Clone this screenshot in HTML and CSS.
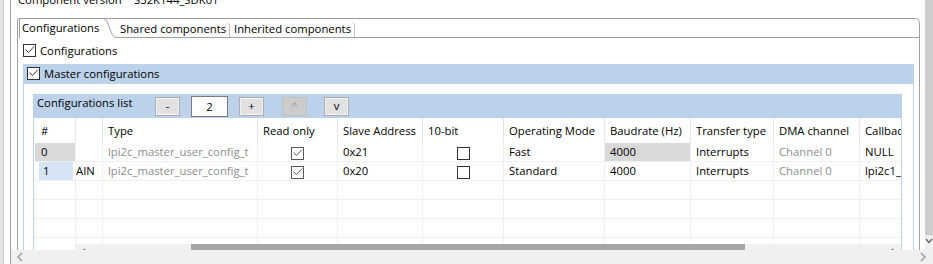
FILE: index.html
```html
<!DOCTYPE html>
<html>
<head>
<meta charset="utf-8">
<link rel="stylesheet" href="styles.css">
</head>
<body>
<div class="page">
  <div class="edge-a"></div>
  <div class="edge-b"></div>
  <div class="scroller">
    <div class="viewport">
      <div class="content">
        <div class="topline"><div class="tl"><span class="lbl">Component version</span><span class="val">S32K144_SDK01</span></div></div>
        <div class="folder">
          <div class="tabs">
            <div class="tab sel">Configurations</div>
            <svg class="curve" width="12" height="19" viewBox="0 0 12 19"><path d="M0 0 C5 0 6 18.5 12 18.5" fill="none" stroke="#a0a0a0" stroke-width="1"/></svg>
            <div class="tab t2"><span class="tab-in">Shared components</span></div>
            <div class="tab t3"><span class="tab-in">Inherited components</span></div>
            <div class="tabfill"></div>
          </div>
          <div class="panel">
            <div class="chk-row">
              <svg class="cb" width="13" height="13" viewBox="0 0 13 13"><rect x="0.5" y="0.5" width="12" height="12" fill="#fff" stroke="#333"/><path d="M2.5 5.5 L5.5 8.5 L11 2.5" fill="none" stroke="#333"/></svg>
              <span class="chk-text">Configurations</span>
            </div>
            <div class="group">
              <div class="ghead">
                <svg class="cb" width="13" height="13" viewBox="0 0 13 13"><rect x="0.5" y="0.5" width="12" height="12" fill="#fff" stroke="#333"/><path d="M2.5 5.5 L5.5 8.5 L11 2.5" fill="none" stroke="#333"/></svg>
                <span class="chk-text">Master configurations</span>
              </div>
              <div class="gbody">
                <div class="sub">
                  <div class="shead">
                    <span class="stitle">Configurations list</span>
                    <span class="btn b-minus">-</span>
                    <span class="num">2</span>
                    <span class="btn b-plus">+</span>
                    <span class="btn b-up dis">^</span>
                    <span class="btn b-down">v</span>
                  </div>
                  <div class="twrap">
                    <div class="grid">
                      <div class="hc">#</div><div class="hc"></div><div class="hc">Type</div><div class="hc">Read only</div><div class="hc">Slave Address</div><div class="hc">10-bit</div><div class="hc">Operating Mode</div><div class="hc">Baudrate (Hz)</div><div class="hc">Transfer type</div><div class="hc">DMA channel</div><div class="hc">Callback</div>

                      <div class="c"><span class="idx idx0">0</span></div><div class="c"></div><div class="c gray">lpi2c_master_user_config_t</div><div class="c ctr"><svg class="cb" width="13" height="13" viewBox="0 0 13 13"><rect x="0.5" y="0.5" width="12" height="12" fill="#fff" stroke="#5a5a5a"/><path d="M2.5 5.5 L5.5 8.5 L11 2.5" fill="none" stroke="#5a5a5a"/></svg></div><div class="c">0x21</div><div class="c ctr"><svg class="cb" width="13" height="13" viewBox="0 0 13 13"><rect x="0.5" y="0.5" width="12" height="12" fill="#fff" stroke="#333"/></svg></div><div class="c">Fast</div><div class="c"><span class="sel-cell">4000</span></div><div class="c">Interrupts</div><div class="c gray">Channel 0</div><div class="c">NULL</div>

                      <div class="c"><span class="idx idx1">1</span></div><div class="c nopad">AIN</div><div class="c gray">lpi2c_master_user_config_t</div><div class="c ctr"><svg class="cb" width="13" height="13" viewBox="0 0 13 13"><rect x="0.5" y="0.5" width="12" height="12" fill="#fff" stroke="#5a5a5a"/><path d="M2.5 5.5 L5.5 8.5 L11 2.5" fill="none" stroke="#5a5a5a"/></svg></div><div class="c">0x20</div><div class="c ctr"><svg class="cb" width="13" height="13" viewBox="0 0 13 13"><rect x="0.5" y="0.5" width="12" height="12" fill="#fff" stroke="#333"/></svg></div><div class="c">Standard</div><div class="c">4000</div><div class="c">Interrupts</div><div class="c gray">Channel 0</div><div class="c">lpi2c1_MasterCallback0</div>

                      <div class="c"></div><div class="c"></div><div class="c"></div><div class="c"></div><div class="c"></div><div class="c"></div><div class="c"></div><div class="c"></div><div class="c"></div><div class="c"></div><div class="c"></div>
                      <div class="c"></div><div class="c"></div><div class="c"></div><div class="c"></div><div class="c"></div><div class="c"></div><div class="c"></div><div class="c"></div><div class="c"></div><div class="c"></div><div class="c"></div>
                      <div class="c"></div><div class="c"></div><div class="c"></div><div class="c"></div><div class="c"></div><div class="c"></div><div class="c"></div><div class="c"></div><div class="c"></div><div class="c"></div><div class="c"></div>
                      <div class="c p"></div><div class="c p"></div><div class="c p"></div><div class="c p"></div><div class="c p"></div><div class="c p"></div><div class="c p"></div><div class="c p"></div><div class="c p"></div><div class="c p"></div><div class="c p"></div>
                    </div>
                    <div class="tscroll">
                      <div class="ts-blank"></div>
                      <div class="ts-track">
                        <svg class="ts-arrow" width="7" height="9" viewBox="0 0 7 9"><path d="M5 1 L1.5 4.5 L5 8" fill="none" stroke="#606060" stroke-width="1.3"/></svg>
                        <div class="ts-pre"></div>
                        <div class="ts-thumb"></div>
                        <div class="ts-post"></div>
                        <svg class="ts-arrow" width="7" height="9" viewBox="0 0 7 9"><path d="M2 1 L5.5 4.5 L2 8" fill="none" stroke="#606060" stroke-width="1.3"/></svg>
                      </div>
                    </div>
                  </div>
                </div>
              </div>
            </div>
          </div>
        </div>
      </div>
      <div class="vscroll">
        <div class="vs-thumb"></div>
        <svg class="vs-arrow" width="8" height="8" viewBox="0 0 8 8"><path d="M1 2 L4 5.5 L7 2" fill="none" stroke="#606060" stroke-width="1.3"/></svg>
      </div>
    </div>
    <div class="hscroll">
      <svg width="8" height="10" viewBox="0 0 8 10"><path d="M6 1 L2 5 L6 9" fill="none" stroke="#a3a3a3" stroke-width="1.6"/></svg>
      <svg width="8" height="10" viewBox="0 0 8 10"><path d="M2 1 L6 5 L2 9" fill="none" stroke="#a3a3a3" stroke-width="1.6"/></svg>
    </div>
  </div>
</div>
</body>
</html>
```

FILE: styles.css
```css
html, body {
  margin: 0;
  padding: 0;
  background: #fff;
}
body {
  font-family: "Open Sans", "Noto Sans", sans-serif;
  font-size: 11.3px;
  color: #000;
}
.page {
  display: flex;
  width: 933px;
  height: 264px;
  overflow: hidden;
}
.edge-a {
  width: 3px;
  background: #e3e3e3;
  border-right: 1px solid #c9c9c9;
}
.edge-b {
  width: 6px;
  border-right: 1px solid #a0a0a0;
}
.scroller {
  flex: 1;
  min-width: 0;
  display: flex;
  flex-direction: column;
}
.viewport {
  height: 250px;
  display: flex;
  overflow: hidden;
}
.content {
  width: 914px;
  flex: none;
  padding-left: 6px;
  box-sizing: border-box;
  overflow: hidden;
}
.topline {
  display: flex;
  align-items: flex-start;
  height: 18px;
  padding-left: 1px;
}
.tl {
  display: flex;
  margin-top: -8px;
  line-height: 16px;
}
.lbl {
  width: 116px;
}
.folder {
  width: 903px;
  height: 232px;
  box-sizing: border-box;
  border: 1px solid #a0a0a0;
  border-bottom: none;
  border-radius: 3px 5px 0 0;
}
.tabs {
  display: flex;
  height: 19px;
}
.tab {
  box-sizing: border-box;
  height: 19px;
  white-space: nowrap;
}
.tab.sel {
  width: 85px;
  margin-left: 1px;
  padding-left: 2px;
  border-left: 1px solid #a0a0a0;
  border-top-left-radius: 2px;
  line-height: 18px;
}
.curve {
  display: block;
  flex: none;
}
.t2, .t3 {
  border-bottom: 1px solid #a0a0a0;
  display: flex;
  align-items: flex-end;
}
.t2 { width: 114px; }
.t3 { width: 125px; }
.tab-in {
  flex: 1;
  box-sizing: border-box;
  height: 15px;
  line-height: 14px;
  padding-left: 4px;
  border-right: 1px solid #c3c3c3;
  border-top-right-radius: 4px;
}
.tabfill {
  flex: 1;
  border-bottom: 1px solid #a0a0a0;
}
.panel {
  padding: 6px 5px 0 5px;
}
.cb {
  display: block;
  flex: none;
}
.chk-row {
  display: flex;
  align-items: center;
  height: 13px;
}
.chk-text {
  margin-left: 4px;
  line-height: 14px;
}
.group {
  margin-top: 7px;
}
.ghead {
  height: 20px;
  background: #bcd2ea;
  display: flex;
  align-items: center;
  padding-left: 4px;
  padding-bottom: 1px;
  box-sizing: border-box;
}
.gbody {
  border-left: 1px solid #bcd2ea;
  border-right: 1px solid #bcd2ea;
  padding: 10px 11px 0 9px;
}
.sub {
  background: #bcd2ea;
  padding: 0 1px;
}
.shead {
  height: 24px;
  display: flex;
  align-items: flex-start;
  padding-left: 3px;
}
.stitle {
  margin-top: 1px;
  line-height: 16px;
  width: 118px;
}
.btn {
  box-sizing: border-box;
  width: 25px;
  height: 19px;
  margin-top: 3px;
  background: #e1e1e1;
  border: 1px solid #adadad;
  box-shadow: inset 0 0 0 1px #f4f4f4;
  text-align: center;
  line-height: 16px;
}
.btn.dis {
  background: #cccccc;
  border-color: #bfbfbf;
  box-shadow: none;
  color: #9a9a9a;
}
.num {
  box-sizing: border-box;
  width: 37px;
  height: 21px;
  margin-top: 2px;
  margin-left: 11px;
  background: #fff;
  border: 1px solid #7a7a7a;
  text-align: center;
  line-height: 19px;
}
.b-plus { margin-left: 11px; }
.b-up { margin-left: 18px; }
.b-down { margin-left: 17px; }
.twrap {
  background: #fff;
  overflow: hidden;
}
.grid {
  display: grid;
  grid-template-columns: 42px 27px 155px 80px 85px 81px 101px 86px 83px 86px 200px;
  grid-template-rows: 25px 19px 19px 19px 19px 19px 6px;
}
.hc {
  height: 25px;
  box-sizing: border-box;
  border-right: 1px solid #e5e5e5;
  padding-left: 5px;
  line-height: 25px;
  white-space: nowrap;
  overflow: hidden;
}
.hc:first-child {
  padding-left: 7px;
}
.c {
  box-sizing: border-box;
  height: 19px;
  border-right: 1px solid #f0f0f0;
  border-bottom: 1px solid #f0f0f0;
  padding-left: 5px;
  line-height: 18px;
  white-space: nowrap;
  overflow: hidden;
}
.c.p {
  height: 6px;
  border-bottom: none;
}
.c.nopad {
  padding-left: 0;
}
.c.ctr {
  display: flex;
  justify-content: center;
  align-items: flex-start;
  padding: 4px 0 0 0;
}
.gray {
  color: #8e8e8e;
}
.idx {
  display: block;
  height: 18px;
}
.idx0 {
  margin-left: -4px;
  padding-left: 6px;
  width: 34px;
  background: #d9d9d9;
}
.idx1 {
  margin-left: 0px;
  padding-left: 4px;
  width: 30px;
  background: #d6e4f3;
}
.sel-cell {
  display: block;
  margin-left: -5px;
  padding-left: 5px;
  height: 18px;
  background: #d9d9d9;
}
.tscroll {
  display: flex;
  height: 17px;
}
.ts-blank {
  width: 41px;
}
.ts-track {
  flex: 1;
  display: flex;
  align-items: center;
  background: #f0f0f0;
  padding: 0 4px 0 5px;
}
.ts-pre { width: 104px; }
.ts-thumb {
  width: 554px;
  height: 17px;
  background: #a6a6a6;
}
.ts-post { flex: 1; }
.vscroll {
  width: 8px;
  background: #f0f0f0;
  display: flex;
  flex-direction: column;
  align-items: center;
}
.vs-thumb {
  width: 8px;
  height: 235px;
  background: #cdcdcd;
}
.vs-arrow {
  margin-top: 2px;
}
.hscroll {
  height: 14px;
  background: #f0f0f0;
  display: flex;
  align-items: center;
  justify-content: space-between;
  padding: 0 6px 0 5px;
}
```
